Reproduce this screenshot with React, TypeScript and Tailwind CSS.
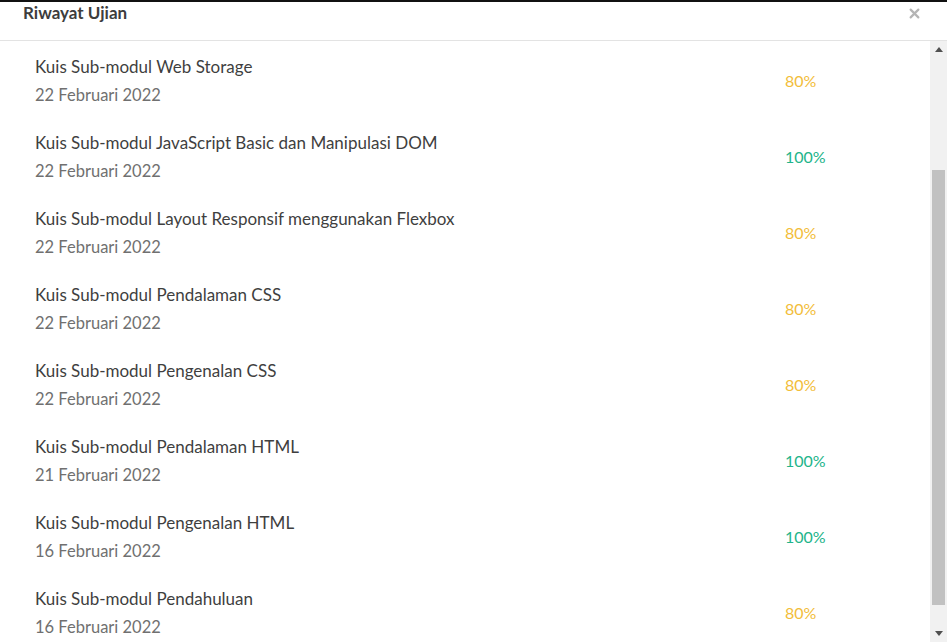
const rows = [
  { title: "Kuis Sub-modul Web Storage", date: "22 Februari 2022", score: 80 },
  { title: "Kuis Sub-modul JavaScript Basic dan Manipulasi DOM", date: "22 Februari 2022", score: 100 },
  { title: "Kuis Sub-modul Layout Responsif menggunakan Flexbox", date: "22 Februari 2022", score: 80 },
  { title: "Kuis Sub-modul Pendalaman CSS", date: "22 Februari 2022", score: 80 },
  { title: "Kuis Sub-modul Pengenalan CSS", date: "22 Februari 2022", score: 80 },
  { title: "Kuis Sub-modul Pendalaman HTML", date: "21 Februari 2022", score: 100 },
  { title: "Kuis Sub-modul Pengenalan HTML", date: "16 Februari 2022", score: 100 },
  { title: "Kuis Sub-modul Pendahuluan", date: "16 Februari 2022", score: 80 },
];

export default function App() {
  return (
    <div className="h-[642px] w-[947px] overflow-hidden bg-white flex flex-col border-t-2 border-[#111]" style={{ fontFamily: "Lato, 'Noto Sans', sans-serif" }}>
      {/* header */}
      <div className="h-[39px] shrink-0 flex items-start justify-between pl-[23px] pr-[27px] border-b border-[#e3e3e3]">
        <h2 className="text-[17px] font-bold text-[#3d3d3d] leading-[22px] mt-[0px]">Riwayat Ujian</h2>
        <svg width="11" height="11" viewBox="0 0 10 10" className="mt-[6px]">
          <path d="M1.5 1.5l7 7M8.5 1.5l-7 7" stroke="#b5b5b5" strokeWidth="2" strokeLinecap="round" />
        </svg>
      </div>

      {/* body */}
      <div className="flex-1 flex min-h-0">
        <div className="flex-1 min-w-0">
          {rows.map((r) => (
            <div key={r.title} className="h-[76px] flex items-center pl-[35px] pt-[3px]">
              <div className="w-[750px]">
                <p className="text-[17px] leading-[24px] text-[#3f3f3f]">{r.title}</p>
                <p className="mt-[4px] text-[16.5px] leading-[24px] text-[#707070]">{r.date}</p>
              </div>
              <span className={`text-[16px] ${r.score === 100 ? "text-[#22b48a]" : "text-[#f2bd3a]"}`}>{r.score}%</span>
            </div>
          ))}
        </div>

        {/* scrollbar */}
        <div className="w-[17px] shrink-0 bg-[#f1f1f1] flex flex-col">
          <div className="h-[17px] flex items-center justify-center">
            <svg width="8" height="5" viewBox="0 0 8 5"><path d="M0 5L4 0l4 5z" fill="#505050" /></svg>
          </div>
          <div className="h-[112px]" />
          <div className="h-[435px] mx-[2px] bg-[#c1c1c1]" />
          <div className="flex-1" />
          <div className="h-[17px] flex items-center justify-center">
            <svg width="8" height="5" viewBox="0 0 8 5"><path d="M0 0L4 5l4-5z" fill="#505050" /></svg>
          </div>
        </div>
      </div>
    </div>
  );
}
